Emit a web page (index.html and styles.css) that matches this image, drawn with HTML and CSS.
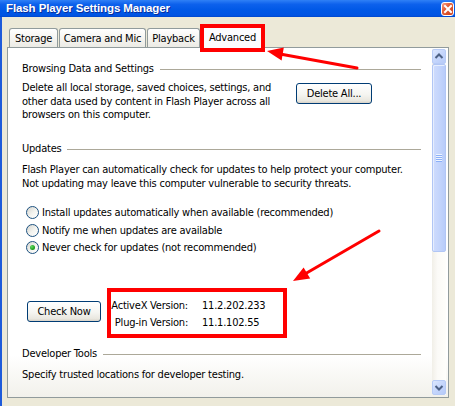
FILE: index.html
```html
<!DOCTYPE html>
<html>
<head>
<meta charset="utf-8">
<title>Flash Player Settings Manager</title>
<link rel="stylesheet" href="styles.css">
</head>
<body>
<div class="window">
  <div class="titlebar">
    <span class="title">Flash Player Settings Manager</span>
    <span class="close">
      <svg width="10" height="10" viewBox="0 0 10 10"><path d="M2 2 L8 8 M8 2 L2 8" stroke="#fff" stroke-width="2" stroke-linecap="square"/></svg>
    </span>
  </div>
  <div class="client">
    <div class="tabs">
      <div class="tab tab-storage">Storage</div>
      <div class="tab tab-camera">Camera and Mic</div>
      <div class="tab tab-playback">Playback</div>
      <div class="tab tab-advanced active">Advanced</div>
    </div>
    <div class="panel">
      <div class="content">
        <div class="section-head"><span>Browsing Data and Settings</span></div>
        <div class="browse-row">
          <p class="text browse-text">Delete all local storage, saved choices, settings, and<br>other data used by content in Flash Player across all<br>browsers on this computer.</p>
          <button class="btn btn-delete">Delete All...</button>
        </div>
        <div class="section-head updates-head"><span>Updates</span></div>
        <p class="text updates-text">Flash Player can automatically check for updates to help protect your computer.<br>Not updating may leave this computer vulnerable to security threats.</p>
        <div class="radios">
          <div class="radio"><span class="radio-dot"></span>Install updates automatically when available (recommended)</div>
          <div class="radio"><span class="radio-dot"></span>Notify me when updates are available</div>
          <div class="radio checked"><span class="radio-dot"></span>Never check for updates (not recommended)</div>
        </div>
        <div class="check-row">
          <button class="btn btn-check">Check Now</button>
          <div class="versions">
            <span class="vlabel">ActiveX Version:</span><span class="vval">11.2.202.233</span>
            <span class="vlabel">Plug-in Version:</span><span class="vval">11.1.102.55</span>
            <div class="highlight"></div>
          </div>
        </div>
        <div class="section-head dev-head"><span>Developer Tools</span></div>
        <p class="text dev-text">Specify trusted locations for developer testing.</p>
      </div>
      <div class="scrollbar">
        <div class="sb-btn">
          <svg width="12" height="13" viewBox="0 0 12 13"><path d="M2.5 8 L6 4.5 L9.5 8" fill="none" stroke="#4D6185" stroke-width="2"/></svg>
        </div>
        <div class="sb-track">
          <div class="sb-thumb">
            <svg width="8" height="8" viewBox="0 0 8 8"><path d="M1 1.5 H7 M1 3.5 H7 M1 5.5 H7 M1 7.5 H7" stroke="#8CB0F8" stroke-width="1"/><path d="M1 0.5 H7 M1 2.5 H7 M1 4.5 H7 M1 6.5 H7" stroke="#EEF4FE" stroke-width="1"/></svg>
          </div>
        </div>
        <div class="sb-btn">
          <svg width="12" height="13" viewBox="0 0 12 13"><path d="M2.5 5 L6 8.5 L9.5 5" fill="none" stroke="#4D6185" stroke-width="2"/></svg>
        </div>
      </div>
    </div>
  </div>
  <div class="tab-highlight"></div>
  <svg class="arrows" width="455" height="406" viewBox="0 0 455 406">
    <line x1="357" y1="68" x2="280" y2="54" stroke="#FF0000" stroke-width="3" stroke-linecap="round"/>
    <polygon points="267,51 283.8,47.6 281.6,60.4" fill="#FF0000"/>
    <line x1="379" y1="231" x2="304" y2="274.5" stroke="#FF0000" stroke-width="3" stroke-linecap="round"/>
    <polygon points="293,281 310.2,278.6 303.6,267.4" fill="#FF0000"/>
  </svg>
</div>
</body>
</html>
```
FILE: styles.css
```css
* {
  box-sizing: border-box;
}

html, body {
  margin: 0;
  padding: 0;
}

body {
  width: 455px;
  height: 406px;
  overflow: hidden;
  background: #ECE9D8;
  font-family: "DejaVu Sans Condensed", "DejaVu Sans", "Liberation Sans", sans-serif;
  font-size: 11px;
  letter-spacing: -0.22px;
  color: #000;
}

.window {
  position: relative;
  width: 455px;
  height: 406px;
  display: flex;
  flex-direction: column;
}

/* Title bar */
.titlebar {
  flex: 0 0 17px;
  display: flex;
  align-items: center;
  justify-content: space-between;
  padding: 0 1px 0 6px;
  background: linear-gradient(to bottom, #2F80F6 0%, #0D61EC 25%, #0058E6 60%, #0054E3 90%, #0046CB 100%);
}

.title {
  color: #fff;
  font-family: "Liberation Sans", Arial, sans-serif;
  font-weight: bold;
  font-size: 11.5px;
  letter-spacing: -0.1px;
  line-height: 17px;
  text-shadow: 1px 1px 0 #0A2F9C;
}

.close {
  width: 13px;
  height: 14px;
  margin-top: 1px;
  border: 1px solid #fff;
  border-radius: 3px;
  background: linear-gradient(135deg, #F4A088 0%, #E35C36 40%, #CC3F1B 100%);
  display: flex;
  align-items: center;
  justify-content: center;
}

/* Client area */
.client {
  flex: 1;
  border-left: 2px solid #1E5BDA;
  padding: 8px 6px 8px 5px;
  display: flex;
  flex-direction: column;
}

.tabs {
  display: flex;
  align-items: flex-end;
  height: 22px;
  padding-left: 2px;
  gap: 1px;
  position: relative;
  z-index: 1;
}

.tab {
  height: 19px;
  border: 1px solid #919B9C;
  border-bottom: none;
  border-radius: 3px 3px 0 0;
  background: linear-gradient(to bottom, #FFFFFF 0%, #F6F5F1 50%, #ECEBE5 100%);
  display: flex;
  align-items: center;
  justify-content: center;
  padding-top: 1px;
  white-space: nowrap;
}

.tab-storage { width: 49px; }
.tab-camera { width: 87px; }
.tab-playback { width: 53px; }
.tab-advanced { width: 65px; }

.tab.active {
  height: 23px;
  margin-left: -1px;
  margin-bottom: -1px;
  background: #FCFCFE;
  border-top: 3px solid #FFC83C;
  padding-top: 0;
  padding-bottom: 2px;
}

.panel {
  height: 351px;
  border: 1px solid #919B9C;
  background: linear-gradient(to bottom, #FFFFFF 0%, #FFFFFF 88%, #F2F1EB 100%);
  display: flex;
}

.content {
  flex: 1;
  padding: 14px 11px 0 14px;
  overflow: hidden;
}

.section-head {
  display: flex;
  align-items: center;
  line-height: 14px;
  white-space: nowrap;
}

.section-head::after {
  content: "";
  flex: 1;
  height: 1px;
  margin-left: 6px;
  background: #ACA899;
}

.text {
  margin: 0;
  line-height: 13.5px;
  white-space: nowrap;
}

.browse-row {
  display: flex;
  align-items: flex-start;
  margin-top: 5px;
}

.browse-text {
  flex: 0 0 274px;
}

.updates-head {
  margin-top: 20.5px;
}

.updates-text {
  margin-top: 7px;
}

.radios {
  margin-top: 14px;
  margin-left: 4px;
}

.radio {
  display: flex;
  align-items: center;
  height: 17.5px;
  white-space: nowrap;
}

.radio-dot {
  width: 13px;
  height: 13px;
  flex: 0 0 13px;
  margin-right: 3px;
  border: 1px solid #1C5180;
  border-radius: 50%;
  background: linear-gradient(135deg, #D4D4CE 0%, #F4F4F0 55%, #FFFFFF 100%);
  display: flex;
  align-items: center;
  justify-content: center;
}

.radio.checked .radio-dot::after {
  content: "";
  width: 5px;
  height: 5px;
  border-radius: 50%;
  background: radial-gradient(circle at 35% 35%, #63DB63 0%, #21A121 60%, #178A17 100%);
}

.btn {
  font: inherit;
  letter-spacing: inherit;
  color: #000;
  height: 21px;
  padding: 0;
  border: 1px solid #003C74;
  border-radius: 3px;
  background: linear-gradient(to bottom, #FFFFFF 0%, #F5F5F1 55%, #E9E7DF 88%, #D8D2C7 100%);
}

.btn-delete {
  width: 76px;
  margin-top: 2px;
}

.check-row {
  display: flex;
  align-items: flex-start;
  margin-top: 40.5px;
}

.btn-check {
  width: 74px;
  margin-left: 5px;
  margin-top: 4px;
}

.versions {
  position: relative;
  margin-left: 10px;
  display: grid;
  grid-template-columns: 77px auto;
  column-gap: 14px;
  line-height: 17px;
  white-space: nowrap;
}

.vlabel {
  text-align: right;
}

.highlight {
  position: absolute;
  left: -4px;
  top: -9px;
  width: 180px;
  height: 50px;
  border: 4px solid #FF0000;
}

.dev-head {
  margin-top: 16px;
}

.dev-text {
  margin-top: 6.5px;
}

/* Scrollbar */
.scrollbar {
  width: 14px;
  margin: 1px 2px 2px 0;
  display: flex;
  flex-direction: column;
  background: linear-gradient(to right, #F1EFE8 0%, #FBFAF7 40%, #FEFEFB 100%);
}

.sb-btn {
  height: 15px;
  flex: 0 0 15px;
  border: 1px solid #B7CBF6;
  border-radius: 2px;
  background: linear-gradient(135deg, #DCE7FE 0%, #C5D6FC 50%, #B6CAF8 100%);
  display: flex;
  align-items: center;
  justify-content: center;
}

.sb-track {
  flex: 1;
}

.sb-thumb {
  height: 188px;
  border: 1px solid #B1C6F5;
  border-radius: 2px;
  background: linear-gradient(to right, #CFDCFD 0%, #C4D5FC 50%, #B8CCFA 100%);
  box-shadow: inset 1px 1px 0 #E6EEFE;
  display: flex;
  align-items: center;
  justify-content: center;
}

/* Annotations */
.tab-highlight {
  position: absolute;
  left: 200px;
  top: 24px;
  width: 65px;
  height: 28px;
  border: 4px solid #FF0000;
  z-index: 4;
}

.arrows {
  position: absolute;
  left: 0;
  top: 0;
  z-index: 5;
  pointer-events: none;
}
```
